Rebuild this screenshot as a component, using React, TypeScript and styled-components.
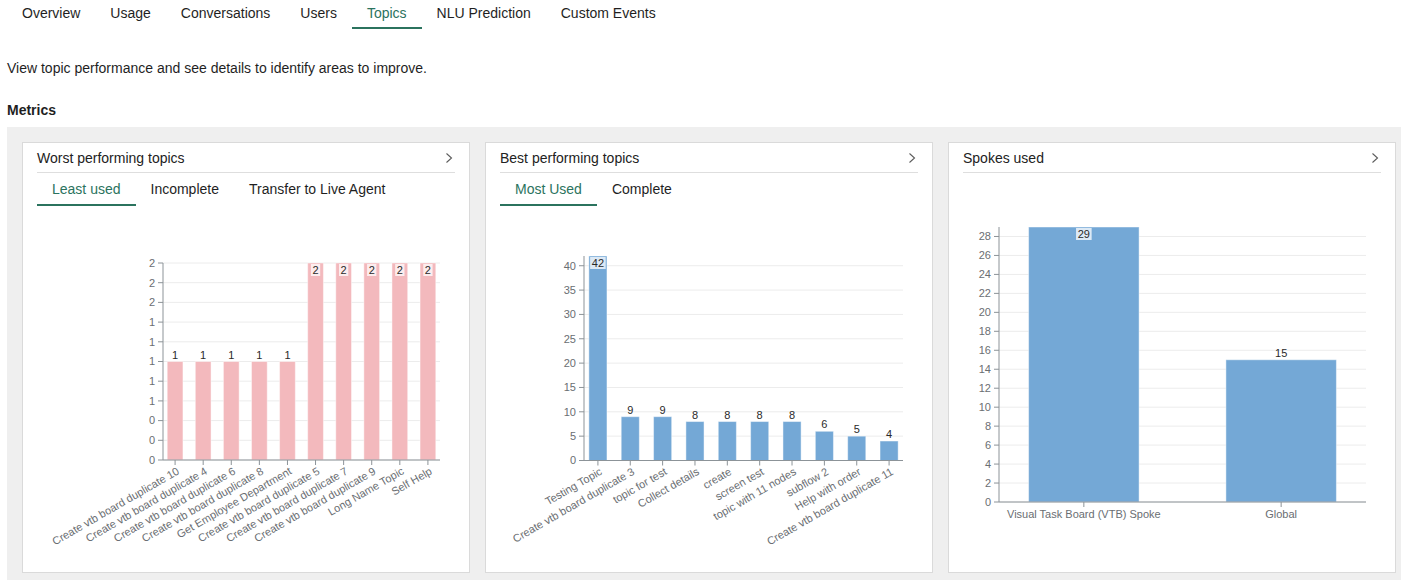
import styled, { createGlobalStyle } from 'styled-components';

type Datum = { label: string; value: number };

type ChartSpec = {
	height: number;
	x0: number;
	x1: number;
	yTop: number;
	yBottom: number;
	max: number;
	ticks: number[];
	format: (v: number) => string;
	color: string;
	rotate: boolean;
	data: Datum[];
};

const GREEN = '#2b735e';

const NAV_TABS = ['Overview', 'Usage', 'Conversations', 'Users', 'Topics', 'NLU Prediction', 'Custom Events'];

const leastUsed: Datum[] = [
	{ label: 'Create vtb board duplicate 10', value: 1 },
	{ label: 'Create vtb board duplicate 4', value: 1 },
	{ label: 'Create vtb board duplicate 6', value: 1 },
	{ label: 'Create vtb board duplicate 8', value: 1 },
	{ label: 'Get Employee Department', value: 1 },
	{ label: 'Create vtb board duplicate 5', value: 2 },
	{ label: 'Create vtb board duplicate 7', value: 2 },
	{ label: 'Create vtb board duplicate 9', value: 2 },
	{ label: 'Long Name Topic', value: 2 },
	{ label: 'Self Help', value: 2 },
];

const mostUsed: Datum[] = [
	{ label: 'Testing Topic', value: 42 },
	{ label: 'Create vtb board duplicate 3', value: 9 },
	{ label: 'topic for test', value: 9 },
	{ label: 'Collect details', value: 8 },
	{ label: 'create', value: 8 },
	{ label: 'screen test', value: 8 },
	{ label: 'topic with 11 nodes', value: 8 },
	{ label: 'subflow 2', value: 6 },
	{ label: 'Help with order', value: 5 },
	{ label: 'Create vtb board duplicate 11', value: 4 },
];

const spokes: Datum[] = [
	{ label: 'Visual Task Board (VTB) Spoke', value: 29 },
	{ label: 'Global', value: 15 },
];

const range = (from: number, to: number, step: number) => {
	const out: number[] = [];
	for (let v = from; v <= to + 1e-9; v += step) out.push(Math.round(v * 100) / 100);
	return out;
};

const worstChart: ChartSpec = {
	height: 366,
	x0: 111,
	x1: 388,
	yTop: 57,
	yBottom: 254,
	max: 2,
	ticks: range(0, 2, 0.2),
	format: (v) => String(Math.round(v)),
	color: '#f3b9bd',
	rotate: true,
	data: leastUsed,
};

const bestChart: ChartSpec = {
	height: 366,
	x0: 69,
	x1: 388,
	yTop: 50,
	yBottom: 254.5,
	max: 42,
	ticks: range(0, 40, 5),
	format: (v) => String(v),
	color: '#74a8d6',
	rotate: true,
	data: mostUsed,
};

const spokesChart: ChartSpec = {
	height: 399,
	x0: 21,
	x1: 388,
	yTop: 54,
	yBottom: 329,
	max: 29,
	ticks: range(0, 28, 2),
	format: (v) => String(v),
	color: '#74a8d6',
	rotate: false,
	data: spokes,
};

// simple band/linear bar chart, drawn the same way for all three cards
const BarChart = ({ spec }: { spec: ChartSpec }) => {
	const { height, x0, x1, yTop, yBottom, max, ticks, format, color, rotate, data } = spec;
	const inner = 0.44;
	const outer = 0.15;
	const step = (x1 - x0) / (data.length - inner + 2 * outer);
	const bandWidth = step * (1 - inner);
	const y = (v: number) => yBottom - (v / max) * (yBottom - yTop);

	return (
		<ChartSvg width={x1} height={height}>
			{ticks.map((t) => (
				<g key={t}>
					<line x1={x0} x2={x1} y1={y(t)} y2={y(t)} stroke="#ececec" />
					<line x1={x0 - 5} x2={x0} y1={y(t)} y2={y(t)} stroke="#8c9398" />
					<AxisText x={x0 - 8} y={y(t)} dy="0.35em" textAnchor="end">
						{format(t)}
					</AxisText>
				</g>
			))}

			{data.map((d, i) => {
				const left = x0 + step * (outer + i);
				const cx = left + bandWidth / 2;
				const top = y(d.value);
				const inside = top - yTop < 12;
				const text = String(d.value);
				const boxW = text.length * 6.3 + 3;
				return (
					<g key={d.label}>
						<rect
							x={left}
							y={top}
							width={bandWidth}
							height={yBottom - top}
							fill={color}
							stroke="#ffffff"
							strokeOpacity={0.45}
						/>
						{inside ? (
							<>
								<rect x={cx - boxW / 2} y={top + 1} width={boxW} height={12} fill="#ffffff" opacity={0.75} />
								<ValueText x={cx} y={top + 11} textAnchor="middle">
									{text}
								</ValueText>
							</>
						) : (
							<ValueText x={cx} y={top - 3} textAnchor="middle">
								{text}
							</ValueText>
						)}
						<line x1={cx} x2={cx} y1={yBottom} y2={yBottom + 5} stroke="#8c9398" />
						{rotate ? (
							<AxisText
								transform={`translate(${cx + 3}, ${yBottom + 10}) rotate(-30)`}
								dy="0.35em"
								textAnchor="end"
							>
								{d.label}
							</AxisText>
						) : (
							<AxisText x={cx} y={yBottom + 16} textAnchor="middle">
								{d.label}
							</AxisText>
						)}
					</g>
				);
			})}

			<line x1={x0} x2={x0} y1={yTop} y2={yBottom} stroke="#8c9398" />
			<line x1={x0} x2={x1} y1={yBottom} y2={yBottom} stroke="#8c9398" />
		</ChartSvg>
	);
};

const Chevron = () => (
	<svg width="8" height="12" viewBox="0 0 8 12">
		<polyline points="1.5,1.5 6.5,6 1.5,10.5" fill="none" stroke="#5c5c5c" strokeWidth="1.1" />
	</svg>
);

type CardProps = {
	title: string;
	tabs?: string[];
	spec: ChartSpec;
};

const MetricCard = ({ title, tabs, spec }: CardProps) => (
	<Card>
		<CardHeader>
			<CardTitle>{title}</CardTitle>
			<Chevron />
		</CardHeader>
		{tabs && (
			<SubTabs>
				{tabs.map((t, i) => (
					<SubTab key={t} $active={i === 0}>
						{t}
					</SubTab>
				))}
			</SubTabs>
		)}
		<BarChart spec={spec} />
	</Card>
);

const App = () => (
	<Page>
		<GlobalStyle />
		<Nav>
			{NAV_TABS.map((t) => (
				<NavTab key={t} $active={t === 'Topics'}>
					{t}
				</NavTab>
			))}
		</Nav>

		<Intro>View topic performance and see details to identify areas to improve.</Intro>
		<SectionTitle>Metrics</SectionTitle>

		<Panel>
			<MetricCard
				title="Worst performing topics"
				tabs={['Least used', 'Incomplete', 'Transfer to Live Agent']}
				spec={worstChart}
			/>
			<MetricCard title="Best performing topics" tabs={['Most Used', 'Complete']} spec={bestChart} />
			<MetricCard title="Spokes used" spec={spokesChart} />
		</Panel>
	</Page>
);

const GlobalStyle = createGlobalStyle`
	html, body {
		margin: 0;
		padding: 0;
		background: #ffffff;
		overflow: hidden;
	}
	body {
		font-family: "Liberation Sans", Arial, Helvetica, sans-serif;
		color: #1f1f1f;
	}
`;

const Page = styled.main`
	width: 1401px;
	height: 580px;
	padding-left: 7px;
	box-sizing: border-box;
`;

const Nav = styled.nav`
	display: flex;
	height: 30px;
`;

const NavTab = styled.div<{ $active?: boolean }>`
	padding: 5px 15px 5px;
	font-size: 14px;
	line-height: 17px;
	height: 17px;
	color: ${(p) => (p.$active ? GREEN : '#1f1f1f')};
	border-bottom: 2px solid ${(p) => (p.$active ? GREEN : 'transparent')};
`;

const Intro = styled.p`
	margin: 28px 0 0;
	font-size: 14px;
	line-height: 20px;
`;

const SectionTitle = styled.h3`
	margin: 22px 0 0;
	font-size: 14px;
	font-weight: bold;
	line-height: 20px;
`;

const Panel = styled.section`
	margin-top: 7px;
	background: #efefef;
	padding: 15px;
	display: flex;
	gap: 15px;
	height: 431px;
`;

const Card = styled.div`
	flex: 0 0 448px;
	box-sizing: border-box;
	height: 431px;
	background: #ffffff;
	border: 1px solid #dadada;
	padding: 0 14px;
	display: flex;
	flex-direction: column;
	overflow: hidden;
`;

const CardHeader = styled.div`
	display: flex;
	align-items: center;
	justify-content: space-between;
	padding: 5px 2px 4px 0;
	border-bottom: 1px solid #dedede;
`;

const CardTitle = styled.span`
	font-size: 14px;
	line-height: 20px;
	color: #222222;
`;

const SubTabs = styled.div`
	display: flex;
`;

const SubTab = styled.div<{ $active?: boolean }>`
	padding: 7px 15px 6px;
	font-size: 14px;
	line-height: 18px;
	color: ${(p) => (p.$active ? GREEN : '#1f1f1f')};
	border-bottom: 2px solid ${(p) => (p.$active ? GREEN : 'transparent')};
`;

const ChartSvg = styled.svg`
	display: block;
	margin: 0 15px;
	overflow: visible;
	flex-shrink: 0;
`;

const AxisText = styled.text`
	font-family: "Liberation Sans", Arial, Helvetica, sans-serif;
	font-size: 11px;
	fill: #6a6e72;
`;

const ValueText = styled.text`
	font-family: "Liberation Sans", Arial, Helvetica, sans-serif;
	font-size: 11px;
	fill: #2a2a2a;
`;

export default App;
